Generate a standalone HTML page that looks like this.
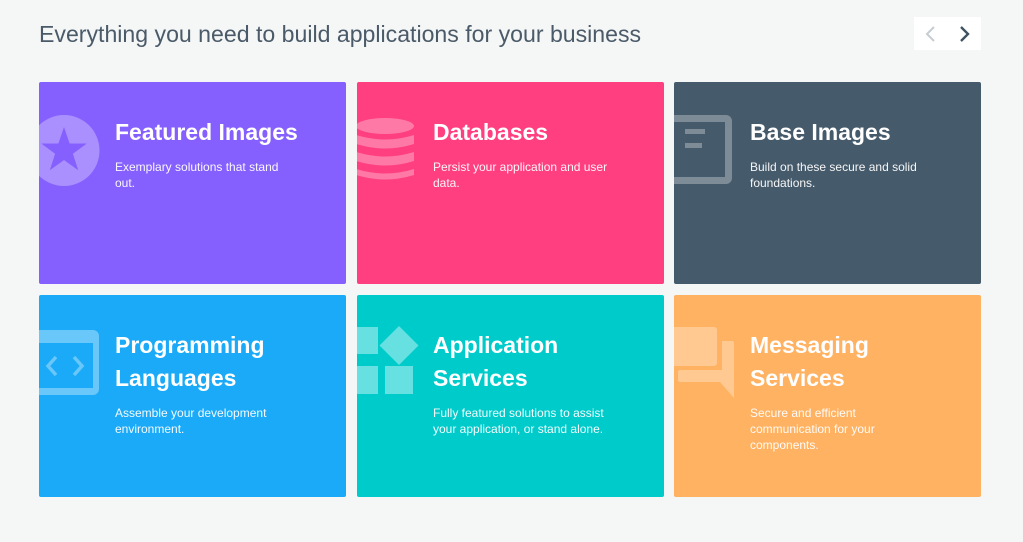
<!DOCTYPE html>
<html><head><meta charset="utf-8"><style>
*{margin:0;padding:0;box-sizing:border-box}
body{width:1023px;height:542px;background:#f5f6f6;font-family:"Liberation Sans",sans-serif;position:relative;overflow:hidden}
h1{position:absolute;left:39px;top:21px;font-size:23.1px;font-weight:normal;color:#4a5a68;letter-spacing:0}
.nav{position:absolute;left:914px;top:17px;width:67px;height:33px;background:#fff}
.nav svg{position:absolute;top:9px}
.card{position:absolute;width:307px;height:202px;border-radius:2px;overflow:hidden;color:#fff}
.card svg.ic{position:absolute;left:0;top:0}
.card h2{position:absolute;left:76px;top:34px;font-size:23px;font-weight:bold;line-height:33px;width:190px}
.card p{position:absolute;left:76px;top:77px;font-size:12px;line-height:16px;width:180px;opacity:.95}
.two p{top:110px}
</style></head><body>
<h1>Everything you need to build applications for your business</h1>
<div class="nav">
<svg style="left:10px" width="14" height="16" viewBox="0 0 14 16"><path d="M10 1L3 8l7 7" fill="none" stroke="#c5ccd2" stroke-width="2"/></svg>
<svg style="left:43px" width="14" height="16" viewBox="0 0 14 16"><path d="M4 1l7 7-7 7" fill="none" stroke="#3e5263" stroke-width="2.4"/></svg>
</div>

<div class="card" style="left:39px;top:82px;background:#8560fe">
<svg class="ic" width="80" height="120"><circle cx="25" cy="68.5" r="35.5" fill="#fff" opacity=".3"/><path d="M25 45l5.6 16.5h17.2l-13.9 10.2 5.3 16.5-14.2-10.2-14.2 10.2 5.3-16.5-13.9-10.2h17.2z" fill="#8560fe"/></svg>
<h2>Featured Images</h2><p>Exemplary solutions that stand out.</p></div>

<div class="card" style="left:357px;top:82px;background:#ff3f80">
<svg class="ic" width="70" height="110"><g fill="#fff" opacity=".3"><ellipse cx="28" cy="44" rx="29" ry="8"/><path d="M-1 53q29 9 58 0v9q-29 9-58 0z"/><path d="M-1 70q29 9 58 0v9q-29 9-58 0z"/><path d="M-1 87q29 9 58 0v6q-29 9-58 0z"/></g></svg>
<h2>Databases</h2><p>Persist your application and user data.</p></div>

<div class="card" style="left:674px;top:82px;background:#455a6a">
<svg class="ic" width="70" height="110"><g fill="#fff" opacity=".3"><path d="M-8 33h60a6 6 0 0 1 6 6v57a6 6 0 0 1-6 6h-60z M0 40v55h51v-55z" fill-rule="evenodd"/><rect x="11" y="47" width="20" height="5"/><rect x="11" y="61" width="17" height="5"/></g></svg>
<h2>Base Images</h2><p>Build on these secure and solid foundations.</p></div>

<div class="card two" style="left:39px;top:295px;background:#1aaaf8">
<svg class="ic" width="70" height="110"><g opacity=".35"><path d="M-8 35h62a6 6 0 0 1 6 6v53a6 6 0 0 1-6 6h-62z M0 48v45h54v-45z" fill-rule="evenodd" fill="#fff"/><path d="M17 62l-8 9 8 9M35 62l8 9-8 9" fill="none" stroke="#fff" stroke-width="3.5"/></g></svg>
<h2>Programming Languages</h2><p>Assemble your development environment.</p></div>

<div class="card two" style="left:357px;top:295px;background:#00cbcb">
<svg class="ic" width="70" height="110"><g fill="#fff" opacity=".4"><rect x="0" y="32" width="21" height="27"/><path d="M42 31l19.5 19.5-19.5 19.5-19.5-19.5z"/><rect x="0" y="71" width="21" height="28"/><rect x="28" y="71" width="28" height="28"/></g></svg>
<h2>Application Services</h2><p>Fully featured solutions to assist your application, or stand alone.</p></div>

<div class="card two" style="left:674px;top:295px;background:#ffb262">
<svg class="ic" width="70" height="110"><g fill="#fff" opacity=".3"><path d="M-2 32h42a3 3 0 0 1 3 3v33a3 3 0 0 1-3 3h-42z"/><path d="M48 46h10a2 2 0 0 1 2 2v55l-14-16h-40a2 2 0 0 1-2-2v-8a2 2 0 0 1 2-2h42z"/></g></svg>
<h2>Messaging Services</h2><p>Secure and efficient communication for your components.</p></div>
</body></html>
